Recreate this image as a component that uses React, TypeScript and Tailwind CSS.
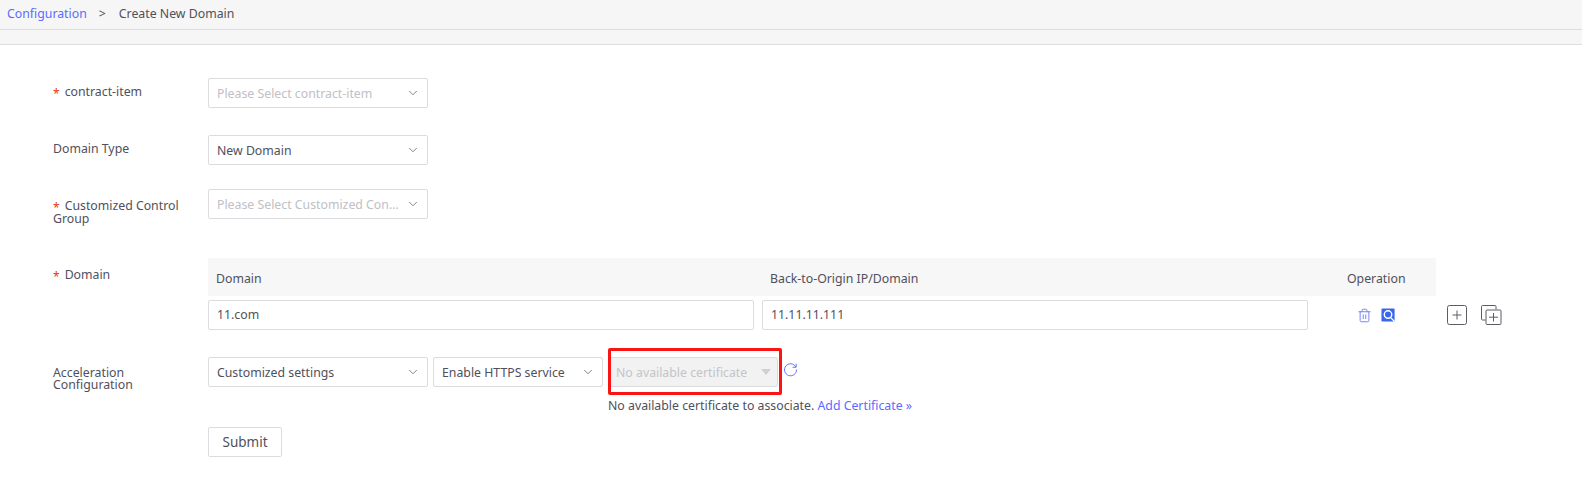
import { ChevronDown, Trash2 } from "lucide-react";

const FONT = "font-['Noto_Sans','Open_Sans',sans-serif]";

function Select({ value, placeholder, className = "w-[220px]" }: { value: string; placeholder?: boolean; className?: string }) {
  return (
    <div className={`flex h-[30px] items-center justify-between rounded-[2px] border border-[#dcdcdf] bg-white pl-[8px] pr-[7px] ${className}`}>
      <span className={`truncate pt-[3px] ${placeholder ? "text-[#c0c0c6]" : "text-[#50505c]"}`}>{value}</span>
      <ChevronDown className="ml-1 h-[14px] w-[14px] shrink-0 text-[#70707c]" strokeWidth={1.5} />
    </div>
  );
}

function Label({ required, children, className = "" }: { required?: boolean; children: React.ReactNode; className?: string }) {
  return (
    <div className={`w-[208px] shrink-0 pl-[53px] pr-[20px] text-[#50505c] ${className}`}>
      {required && <span className="mr-[5px] align-[-2px] text-[12px] leading-[0] text-[#e8380d]">*</span>}
      {children}
    </div>
  );
}

export default function App() {
  return (
    <div className={`h-[484px] w-[1582px] overflow-hidden bg-white text-[12.3px] ${FONT}`}>
      <div className="flex h-[30px] items-start border-b border-[#dedede] bg-[#f6f6f6] pl-[7px] pt-[5px] leading-[18px]">
        <a className="text-[#5a6cff]">Configuration</a>
        <span className="ml-[12px] text-[#50505c]">&gt;</span>
        <span className="ml-[13px] text-[#50505c]">Create New Domain</span>
      </div>
      <div className="h-[15px] border-b border-[#dedede] bg-[#f6f6f6]" />

      <div className="flex pt-[33px]">
        <Label required className="pt-[5px] leading-[18px]">contract-item</Label>
        <Select value="Please Select contract-item" placeholder />
      </div>

      <div className="mt-[27px] flex">
        <Label className="pt-[5px] leading-[18px]">Domain Type</Label>
        <Select value="New Domain" />
      </div>

      <div className="mt-[24px] flex">
        <Label required className="pt-[10px] leading-[13px]">Customized Control Group</Label>
        <Select value="Please Select Customized Control Group" placeholder />
      </div>

      <div className="mt-[33px] flex">
        <Label required className="pt-[8px] leading-[18px]">Domain</Label>
        <div>
          <div className="flex h-[38px] w-[1228px] items-center bg-[#f7f7f7] text-[#50505c]">
            <span className="ml-[8px] w-[554px] shrink-0 pt-[5px]">Domain</span>
            <span className="w-[552px] shrink-0 pt-[5px]">Back-to-Origin IP/Domain</span>
            <span className="ml-[25px] pt-[5px]">Operation</span>
          </div>
          <div className="mt-[4px] flex h-[30px] items-center">
            <div className="flex h-[30px] w-[546px] items-center rounded-[2px] border border-[#dcdcdf] px-[8px] pt-[1px] text-[#50505c]">11.com</div>
            <div className="ml-[8px] flex h-[30px] w-[546px] items-center rounded-[2px] border border-[#dcdcdf] px-[8px] pt-[1px] text-[#50505c]">11.11.11.111</div>
            <Trash2 className="ml-[49px] h-[15px] w-[15px] text-[#6d7dff]" strokeWidth={1.5} />
            <svg viewBox="0 0 16 16" className="ml-[9px] h-[15px] w-[15px]">
              <rect x="0.5" y="0.5" width="14" height="14" rx="1" fill="#3a66ee" />
              <circle cx="7.5" cy="7" r="4" fill="none" stroke="#fff" strokeWidth="1.5" />
              <path d="M10 10l5 5" stroke="#fff" strokeWidth="1.4" />
            </svg>
            <svg viewBox="0 0 20 20" className="ml-[51px] h-[20px] w-[20px]" fill="none">
              <rect x="0.5" y="0.5" width="19" height="19" rx="2" stroke="#5c5c64" />
              <path d="M10 5.5v9M5.5 10h9" stroke="#5c5c64" />
            </svg>
            <svg viewBox="0 0 21 20" className="ml-[14px] h-[20px] w-[21px]" fill="none">
              <path d="M4.5 15H1.5a1 1 0 0 1-1-1V1.5a1 1 0 0 1 1-1H14a1 1 0 0 1 1 1v3" stroke="#5c5c64" />
              <rect x="5" y="5" width="15" height="14.5" rx="1" stroke="#5c5c64" />
              <path d="M12.5 8v8.5M8 12.2h9" stroke="#5c5c64" />
            </svg>
          </div>
        </div>
      </div>

      <div className="mt-[27px] flex">
        <Label className="pt-[10px] leading-[12px]">Acceleration Configuration</Label>
        <div>
          <div className="flex items-start">
            <Select value="Customized settings" />
            <Select value="Enable HTTPS service" className="ml-[5px] w-[170px]" />
            <div className="relative ml-[5px]">
              <div className="flex h-[30px] w-[170px] items-center justify-between rounded-[2px] border border-[#dcdcdf] bg-[#f2f2f2] pl-[7px] pr-[6px] text-[#c4c4c8]">
                <span className="truncate pt-[3px]">No available certificate</span>
                <span className="h-0 w-0 border-x-[5px] border-t-[6px] border-x-transparent border-t-[#d0d0d4]" />
              </div>
              <div className="absolute left-0 -right-[4px] -top-[9px] -bottom-[8px] rounded-[2px] border-[3px] border-[#fb1414]" />
            </div>
            <svg viewBox="0 0 16 16" className="ml-[5px] mt-[5px] h-[15px] w-[15px]" fill="none">
              <path d="M13.6 5.2A6.4 6.4 0 1 0 14.4 8" stroke="#5a6cff" strokeWidth="1" />
              <path d="M14 1.8v3.8h-3.8" stroke="#5a6cff" strokeWidth="1" />
            </svg>
          </div>
          <div className="ml-[400px] mt-[10px] leading-[18px] text-[#50505c]">
            No available certificate to associate. <a className="text-[#5a6cff]">Add Certificate »</a>
          </div>
        </div>
      </div>

      <div className="ml-[208px] mt-[12px]">
        <div className="flex h-[30px] w-[74px] items-center justify-center rounded-[2px] border border-[#dcdcdf] text-[13.5px] text-[#50505c]">Submit</div>
      </div>
    </div>
  );
}
